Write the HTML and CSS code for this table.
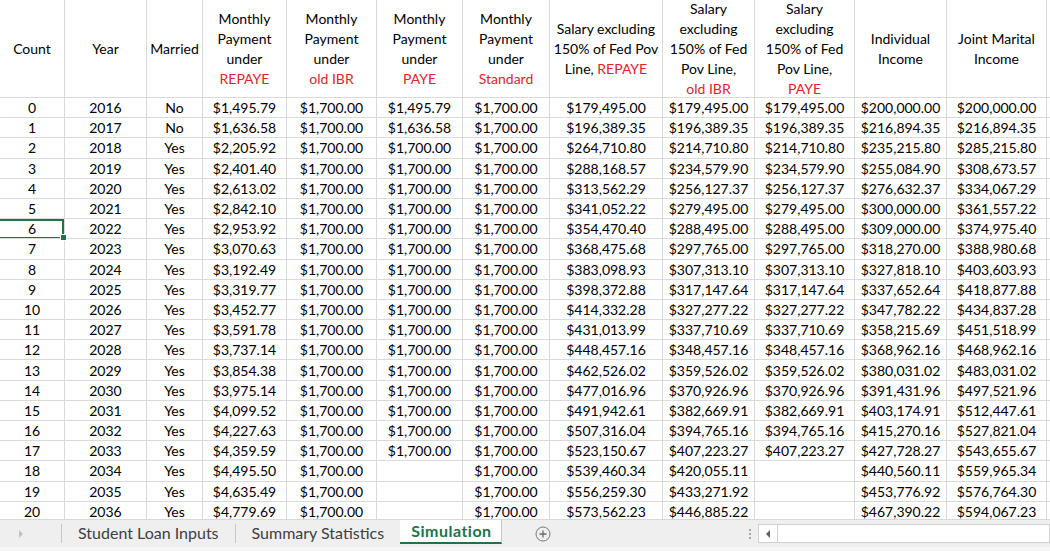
FILE: index.html
```html
<!DOCTYPE html>
<html>
<head>
<meta charset="utf-8">
<link rel="stylesheet" href="styles.css">
</head>
<body>
<div class="sheet">
<table class="grid">
<colgroup>
<col style="width:65px"><col style="width:82px"><col style="width:56px"><col style="width:84px"><col style="width:90px"><col style="width:86px"><col style="width:87px"><col style="width:113px"><col style="width:92px"><col style="width:100px"><col style="width:92px"><col style="width:100px"><col style="width:10px">
</colgroup>
<thead>
<tr class="head">
<th><div class="hc"><div>Count</div></div></th>
<th><div class="hc"><div>Year</div></div></th>
<th><div class="hc"><div>Married</div></div></th>
<th><div class="hc"><div>Monthly<br>Payment<br>under<br><span class="red">REPAYE</span></div></div></th>
<th><div class="hc"><div>Monthly<br>Payment<br>under<br><span class="red">old IBR</span></div></div></th>
<th><div class="hc"><div>Monthly<br>Payment<br>under<br><span class="red">PAYE</span></div></div></th>
<th><div class="hc"><div>Monthly<br>Payment<br>under<br><span class="red">Standard</span></div></div></th>
<th><div class="hc"><div>Salary excluding<br>150% of Fed Pov<br>Line, <span class="red">REPAYE</span></div></div></th>
<th><div class="hc"><div>Salary<br>excluding<br>150% of Fed<br>Pov Line,<br><span class="red">old IBR</span></div></div></th>
<th><div class="hc"><div>Salary<br>excluding<br>150% of Fed<br>Pov Line,<br><span class="red">PAYE</span></div></div></th>
<th><div class="hc"><div>Individual<br>Income</div></div></th>
<th><div class="hc"><div>Joint Marital<br>Income</div></div></th>
<th><div class="hc"></div></th>
</tr>
</thead>
<tbody>
<tr><td>0</td><td>2016</td><td>No</td><td>$1,495.79</td><td>$1,700.00</td><td>$1,495.79</td><td>$1,700.00</td><td>$179,495.00</td><td>$179,495.00</td><td>$179,495.00</td><td>$200,000.00</td><td>$200,000.00</td><td></td></tr>
<tr><td>1</td><td>2017</td><td>No</td><td>$1,636.58</td><td>$1,700.00</td><td>$1,636.58</td><td>$1,700.00</td><td>$196,389.35</td><td>$196,389.35</td><td>$196,389.35</td><td>$216,894.35</td><td>$216,894.35</td><td></td></tr>
<tr><td>2</td><td>2018</td><td>Yes</td><td>$2,205.92</td><td>$1,700.00</td><td>$1,700.00</td><td>$1,700.00</td><td>$264,710.80</td><td>$214,710.80</td><td>$214,710.80</td><td>$235,215.80</td><td>$285,215.80</td><td></td></tr>
<tr><td>3</td><td>2019</td><td>Yes</td><td>$2,401.40</td><td>$1,700.00</td><td>$1,700.00</td><td>$1,700.00</td><td>$288,168.57</td><td>$234,579.90</td><td>$234,579.90</td><td>$255,084.90</td><td>$308,673.57</td><td></td></tr>
<tr><td>4</td><td>2020</td><td>Yes</td><td>$2,613.02</td><td>$1,700.00</td><td>$1,700.00</td><td>$1,700.00</td><td>$313,562.29</td><td>$256,127.37</td><td>$256,127.37</td><td>$276,632.37</td><td>$334,067.29</td><td></td></tr>
<tr><td>5</td><td>2021</td><td>Yes</td><td>$2,842.10</td><td>$1,700.00</td><td>$1,700.00</td><td>$1,700.00</td><td>$341,052.22</td><td>$279,495.00</td><td>$279,495.00</td><td>$300,000.00</td><td>$361,557.22</td><td></td></tr>
<tr><td class="sel">6<span class="handle"></span></td><td>2022</td><td>Yes</td><td>$2,953.92</td><td>$1,700.00</td><td>$1,700.00</td><td>$1,700.00</td><td>$354,470.40</td><td>$288,495.00</td><td>$288,495.00</td><td>$309,000.00</td><td>$374,975.40</td><td></td></tr>
<tr><td>7</td><td>2023</td><td>Yes</td><td>$3,070.63</td><td>$1,700.00</td><td>$1,700.00</td><td>$1,700.00</td><td>$368,475.68</td><td>$297,765.00</td><td>$297,765.00</td><td>$318,270.00</td><td>$388,980.68</td><td></td></tr>
<tr><td>8</td><td>2024</td><td>Yes</td><td>$3,192.49</td><td>$1,700.00</td><td>$1,700.00</td><td>$1,700.00</td><td>$383,098.93</td><td>$307,313.10</td><td>$307,313.10</td><td>$327,818.10</td><td>$403,603.93</td><td></td></tr>
<tr><td>9</td><td>2025</td><td>Yes</td><td>$3,319.77</td><td>$1,700.00</td><td>$1,700.00</td><td>$1,700.00</td><td>$398,372.88</td><td>$317,147.64</td><td>$317,147.64</td><td>$337,652.64</td><td>$418,877.88</td><td></td></tr>
<tr><td>10</td><td>2026</td><td>Yes</td><td>$3,452.77</td><td>$1,700.00</td><td>$1,700.00</td><td>$1,700.00</td><td>$414,332.28</td><td>$327,277.22</td><td>$327,277.22</td><td>$347,782.22</td><td>$434,837.28</td><td></td></tr>
<tr><td>11</td><td>2027</td><td>Yes</td><td>$3,591.78</td><td>$1,700.00</td><td>$1,700.00</td><td>$1,700.00</td><td>$431,013.99</td><td>$337,710.69</td><td>$337,710.69</td><td>$358,215.69</td><td>$451,518.99</td><td></td></tr>
<tr><td>12</td><td>2028</td><td>Yes</td><td>$3,737.14</td><td>$1,700.00</td><td>$1,700.00</td><td>$1,700.00</td><td>$448,457.16</td><td>$348,457.16</td><td>$348,457.16</td><td>$368,962.16</td><td>$468,962.16</td><td></td></tr>
<tr><td>13</td><td>2029</td><td>Yes</td><td>$3,854.38</td><td>$1,700.00</td><td>$1,700.00</td><td>$1,700.00</td><td>$462,526.02</td><td>$359,526.02</td><td>$359,526.02</td><td>$380,031.02</td><td>$483,031.02</td><td></td></tr>
<tr><td>14</td><td>2030</td><td>Yes</td><td>$3,975.14</td><td>$1,700.00</td><td>$1,700.00</td><td>$1,700.00</td><td>$477,016.96</td><td>$370,926.96</td><td>$370,926.96</td><td>$391,431.96</td><td>$497,521.96</td><td></td></tr>
<tr><td>15</td><td>2031</td><td>Yes</td><td>$4,099.52</td><td>$1,700.00</td><td>$1,700.00</td><td>$1,700.00</td><td>$491,942.61</td><td>$382,669.91</td><td>$382,669.91</td><td>$403,174.91</td><td>$512,447.61</td><td></td></tr>
<tr><td>16</td><td>2032</td><td>Yes</td><td>$4,227.63</td><td>$1,700.00</td><td>$1,700.00</td><td>$1,700.00</td><td>$507,316.04</td><td>$394,765.16</td><td>$394,765.16</td><td>$415,270.16</td><td>$527,821.04</td><td></td></tr>
<tr><td>17</td><td>2033</td><td>Yes</td><td>$4,359.59</td><td>$1,700.00</td><td>$1,700.00</td><td>$1,700.00</td><td>$523,150.67</td><td>$407,223.27</td><td>$407,223.27</td><td>$427,728.27</td><td>$543,655.67</td><td></td></tr>
<tr><td>18</td><td>2034</td><td>Yes</td><td>$4,495.50</td><td>$1,700.00</td><td></td><td>$1,700.00</td><td>$539,460.34</td><td>$420,055.11</td><td></td><td>$440,560.11</td><td>$559,965.34</td><td></td></tr>
<tr><td>19</td><td>2035</td><td>Yes</td><td>$4,635.49</td><td>$1,700.00</td><td></td><td>$1,700.00</td><td>$556,259.30</td><td>$433,271.92</td><td></td><td>$453,776.92</td><td>$576,764.30</td><td></td></tr>
<tr><td>20</td><td>2036</td><td>Yes</td><td>$4,779.69</td><td>$1,700.00</td><td></td><td>$1,700.00</td><td>$573,562.23</td><td>$446,885.22</td><td></td><td>$467,390.22</td><td>$594,067.23</td><td></td></tr>
</tbody>
</table>
</div>
<div class="tabbar">
<div class="nav"><span class="tri"></span></div>
<div class="tab">Student Loan Inputs</div>
<div class="tab">Summary Statistics</div>
<div class="tab active">Simulation</div>
<div class="add">
<svg width="16" height="16" viewBox="0 0 16 16"><circle cx="8" cy="8" r="7" fill="none" stroke="#7a7a7a" stroke-width="1"/><path d="M8 4.5v7M4.5 8h7" stroke="#6a6a6a" stroke-width="1.3"/></svg>
</div>
<div class="spacer"></div>
<div class="dots"><span></span><span></span><span></span></div>
<div class="scroll">
<div class="sbtn"><span class="ltri"></span></div>
<div class="strack"></div>
</div>
</div>
</body>
</html>
```

FILE: styles.css
```css
html, body {
  margin: 0;
  padding: 0;
  background: #ffffff;
}
body {
  width: 1050px;
  height: 551px;
  overflow: hidden;
  font-family: Lato, "Open Sans", sans-serif;
  color: #000;
}
.sheet {
  height: 519px;
  overflow: hidden;
}
.grid {
  table-layout: fixed;
  border-collapse: separate;
  border-spacing: 0;
  width: 1057px;
  font-size: 14px;
}
.grid th,
.grid td {
  padding: 0;
  border-right: 1px solid #dadada;
  border-bottom: 1px solid #dadada;
  text-align: center;
  white-space: nowrap;
  overflow: visible;
}
.grid th {
  font-weight: normal;
  line-height: 20px;
  vertical-align: middle;
}
.head {
  height: 98px;
}
.hc {
  height: 97px;
  display: flex;
  flex-direction: column;
  justify-content: center;
  align-items: center;
  box-sizing: border-box;
}
.grid tbody tr {
  height: 20.2px;
}
.grid td {
  line-height: 19px;
  vertical-align: middle;
}
.red {
  color: #e0232b;
}
.grid td.sel {
  position: relative;
  box-shadow: inset 0 2px 0 #217346, inset -2px 0 0 #217346, inset 0 -1px 0 #217346;
}
.handle {
  position: absolute;
  right: -3px;
  bottom: -3px;
  width: 5px;
  height: 5px;
  background: #217346;
  border: 1px solid #fff;
  z-index: 2;
}
.tabbar {
  height: 32px;
  box-sizing: border-box;
  background: #efefef;
  border-top: 1px solid #d8d8d8;
  border-bottom: 4px solid #f6f6f6;
  display: flex;
  align-items: stretch;
  font-size: 16px;
  color: #404040;
}
.nav {
  width: 62px;
  display: flex;
  align-items: center;
  justify-content: flex-start;
  padding-left: 19px;
  box-sizing: border-box;
  border-right: 1px solid #c6c6c6;
  margin: 4px 0 4px 0;
}
.tri {
  width: 0;
  height: 0;
  border-top: 4px solid transparent;
  border-bottom: 4px solid transparent;
  border-left: 4px solid #c2c2c2;
}
.tab {
  display: flex;
  align-items: center;
  padding: 0 16px 2px 16px;
  margin: 4px 0 4px 0;
  border-right: 1px solid #c6c6c6;
  line-height: 18px;
}
.tab.active {
  margin: 0 0 3px -1px;
  padding: 0 9px 0 11px;
  background: #ffffff;
  border-right: 1px solid #c6c6c6;
  border-bottom: 2px solid #217346;
  font-weight: bold;
  letter-spacing: 0.5px;
  color: #217346;
}
.add {
  display: flex;
  align-items: center;
  padding-left: 33px;
}
.add svg {
  display: block;
}
.spacer {
  flex: 1;
}
.dots {
  width: 16px;
  display: flex;
  flex-direction: column;
  align-items: center;
  justify-content: center;
  gap: 2px;
}
.dots span {
  width: 2px;
  height: 2px;
  background: #a8a8a8;
}
.scroll {
  width: 292px;
  display: flex;
  margin: 4px 0 4px 0;
}
.sbtn {
  width: 20px;
  box-sizing: border-box;
  background: #ffffff;
  border: 1px solid #d0d0d0;
  display: flex;
  align-items: center;
  justify-content: center;
}
.ltri {
  width: 0;
  height: 0;
  border-top: 4px solid transparent;
  border-bottom: 4px solid transparent;
  border-right: 4px solid #606060;
}
.strack {
  flex: 1;
  background: #ffffff;
  border: 1px solid #d0d0d0;
  border-left: none;
}
```
